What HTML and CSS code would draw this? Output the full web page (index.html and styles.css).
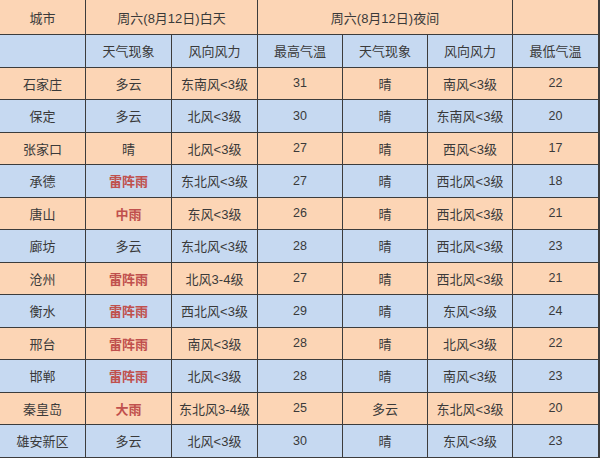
FILE: index.html
```html
<!DOCTYPE html>
<html lang="zh">
<head>
<meta charset="utf-8">
<link rel="stylesheet" href="styles.css">
</head>
<body>
<div class="sheet">
  <div class="c p">城市</div>
  <div class="c p s2">周六(8月12日)白天</div>
  <div class="c p s3">周六(8月12日)夜间</div>
  <div class="c p"></div>

  <div class="c b"></div>
  <div class="c b">天气现象</div>
  <div class="c b">风向风力</div>
  <div class="c b">最高气温</div>
  <div class="c b">天气现象</div>
  <div class="c b">风向风力</div>
  <div class="c b">最低气温</div>

  <div class="c p">石家庄</div><div class="c p">多云</div><div class="c p">东南风&lt;3级</div><div class="c p n">31</div><div class="c p">晴</div><div class="c p">南风&lt;3级</div><div class="c p n">22</div>
  <div class="c b">保定</div><div class="c b">多云</div><div class="c b">北风&lt;3级</div><div class="c b n">30</div><div class="c b">晴</div><div class="c b">东南风&lt;3级</div><div class="c b n">20</div>
  <div class="c p">张家口</div><div class="c p">晴</div><div class="c p">北风&lt;3级</div><div class="c p n">27</div><div class="c p">晴</div><div class="c p">西风&lt;3级</div><div class="c p n">17</div>
  <div class="c b">承德</div><div class="c b r">雷阵雨</div><div class="c b">东北风&lt;3级</div><div class="c b n">27</div><div class="c b">晴</div><div class="c b">西北风&lt;3级</div><div class="c b n">18</div>
  <div class="c p">唐山</div><div class="c p r">中雨</div><div class="c p">东风&lt;3级</div><div class="c p n">26</div><div class="c p">晴</div><div class="c p">西北风&lt;3级</div><div class="c p n">21</div>
  <div class="c b">廊坊</div><div class="c b">多云</div><div class="c b">东北风&lt;3级</div><div class="c b n">28</div><div class="c b">晴</div><div class="c b">西北风&lt;3级</div><div class="c b n">23</div>
  <div class="c p">沧州</div><div class="c p r">雷阵雨</div><div class="c p">北风3-4级</div><div class="c p n">27</div><div class="c p">晴</div><div class="c p">西北风&lt;3级</div><div class="c p n">21</div>
  <div class="c b">衡水</div><div class="c b r">雷阵雨</div><div class="c b">西北风&lt;3级</div><div class="c b n">29</div><div class="c b">晴</div><div class="c b">东风&lt;3级</div><div class="c b n">24</div>
  <div class="c p">邢台</div><div class="c p r">雷阵雨</div><div class="c p">南风&lt;3级</div><div class="c p n">28</div><div class="c p">晴</div><div class="c p">北风&lt;3级</div><div class="c p n">22</div>
  <div class="c b">邯郸</div><div class="c b r">雷阵雨</div><div class="c b">北风&lt;3级</div><div class="c b n">28</div><div class="c b">晴</div><div class="c b">南风&lt;3级</div><div class="c b n">23</div>
  <div class="c p">秦皇岛</div><div class="c p r">大雨</div><div class="c p">东北风3-4级</div><div class="c p n">25</div><div class="c p">多云</div><div class="c p">东北风&lt;3级</div><div class="c p n">20</div>
  <div class="c b">雄安新区</div><div class="c b">多云</div><div class="c b">北风&lt;3级</div><div class="c b n">30</div><div class="c b">晴</div><div class="c b">东风&lt;3级</div><div class="c b n">23</div>
</div>
</body>
</html>
```

FILE: styles.css
```css
html, body {
  margin: 0;
  padding: 0;
  background: #ffffff;
}

.sheet {
  display: grid;
  width: 599px;
  grid-template-columns: 85px 85px 85px 84px 84px 84px 85px;
  grid-template-rows: 34px repeat(13, 31.5px);
  gap: 1px;
  padding: 0 1px 1px 0;
  background: #3c3c3c;
  box-sizing: content-box;
}

.c {
  display: flex;
  align-items: center;
  justify-content: center;
  font-family: "Liberation Sans", "Noto Sans CJK SC", sans-serif;
  font-size: 13px;
  color: #3a3a3a;
  white-space: nowrap;
}

.p { background: #fcd5b5; }
.b { background: #c6d9f1; }

.s2 { grid-column: span 2; }
.s3 { grid-column: span 3; }

.n { font-size: 12.5px; }

.r {
  color: #c0504d;
  font-weight: bold;
}
```
